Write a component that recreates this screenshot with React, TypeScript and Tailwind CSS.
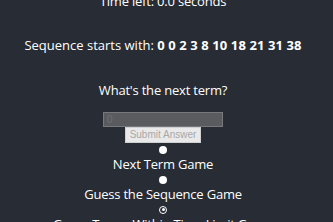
const games = [
  { label: 'Next Term Game', checked: false },
  { label: 'Guess the Sequence Game', checked: false },
  { label: 'Guess Terms Within Time Limit Game', checked: true },
]

export default function App() {
  return (
    <div className="h-[222px] overflow-hidden bg-[#282c34] text-white pr-[7px] font-['Open_Sans',sans-serif] text-[13px] tracking-[-0.2px]">
      <div className="-mt-[9.5px] flex flex-col items-center">
        <p className="leading-[20px]">Time left: 0.0 seconds</p>
        <p className="mt-[24.5px] leading-[20px] whitespace-nowrap tracking-normal">
          Sequence starts with: <b className="font-bold tracking-[0.1px]">0 0 2 3 8 10 18 21 31 38</b>
        </p>
        <p className="mt-[24.5px] leading-[20px]">What's the next term?</p>

        <input
          disabled
          placeholder="0"
          className="mt-[12px] w-[120px] h-[15px] bg-[#5a5b5f] border border-[#77787b] px-[3px] text-[10px] tracking-normal placeholder:text-[#707175] font-['Liberation_Sans',sans-serif]"
        />
        <button
          disabled
          className="w-[76px] h-[16px] bg-[#e9e9e9] border border-[#d0d0d0] text-[#a8a8a8] text-[10px] leading-none tracking-normal font-['Liberation_Sans',sans-serif]"
        >
          Submit Answer
        </button>

        {games.map((g, i) => (
          <label key={g.label} className={`flex flex-col items-center ${i === 0 ? 'mt-[3px]' : 'mt-[4px]'}`}>
            {g.checked ? (
              <span className="w-[8px] h-[8px] rounded-full border-[1.5px] border-white bg-[#282c34] flex items-center justify-center">
                <span className="w-[3px] h-[3px] rounded-full bg-white" />
              </span>
            ) : (
              <span className="w-[8px] h-[8px] rounded-full bg-white" />
            )}
            <span className="mt-[3px] leading-[15px] whitespace-nowrap">{g.label}</span>
          </label>
        ))}
      </div>
    </div>
  )
}
